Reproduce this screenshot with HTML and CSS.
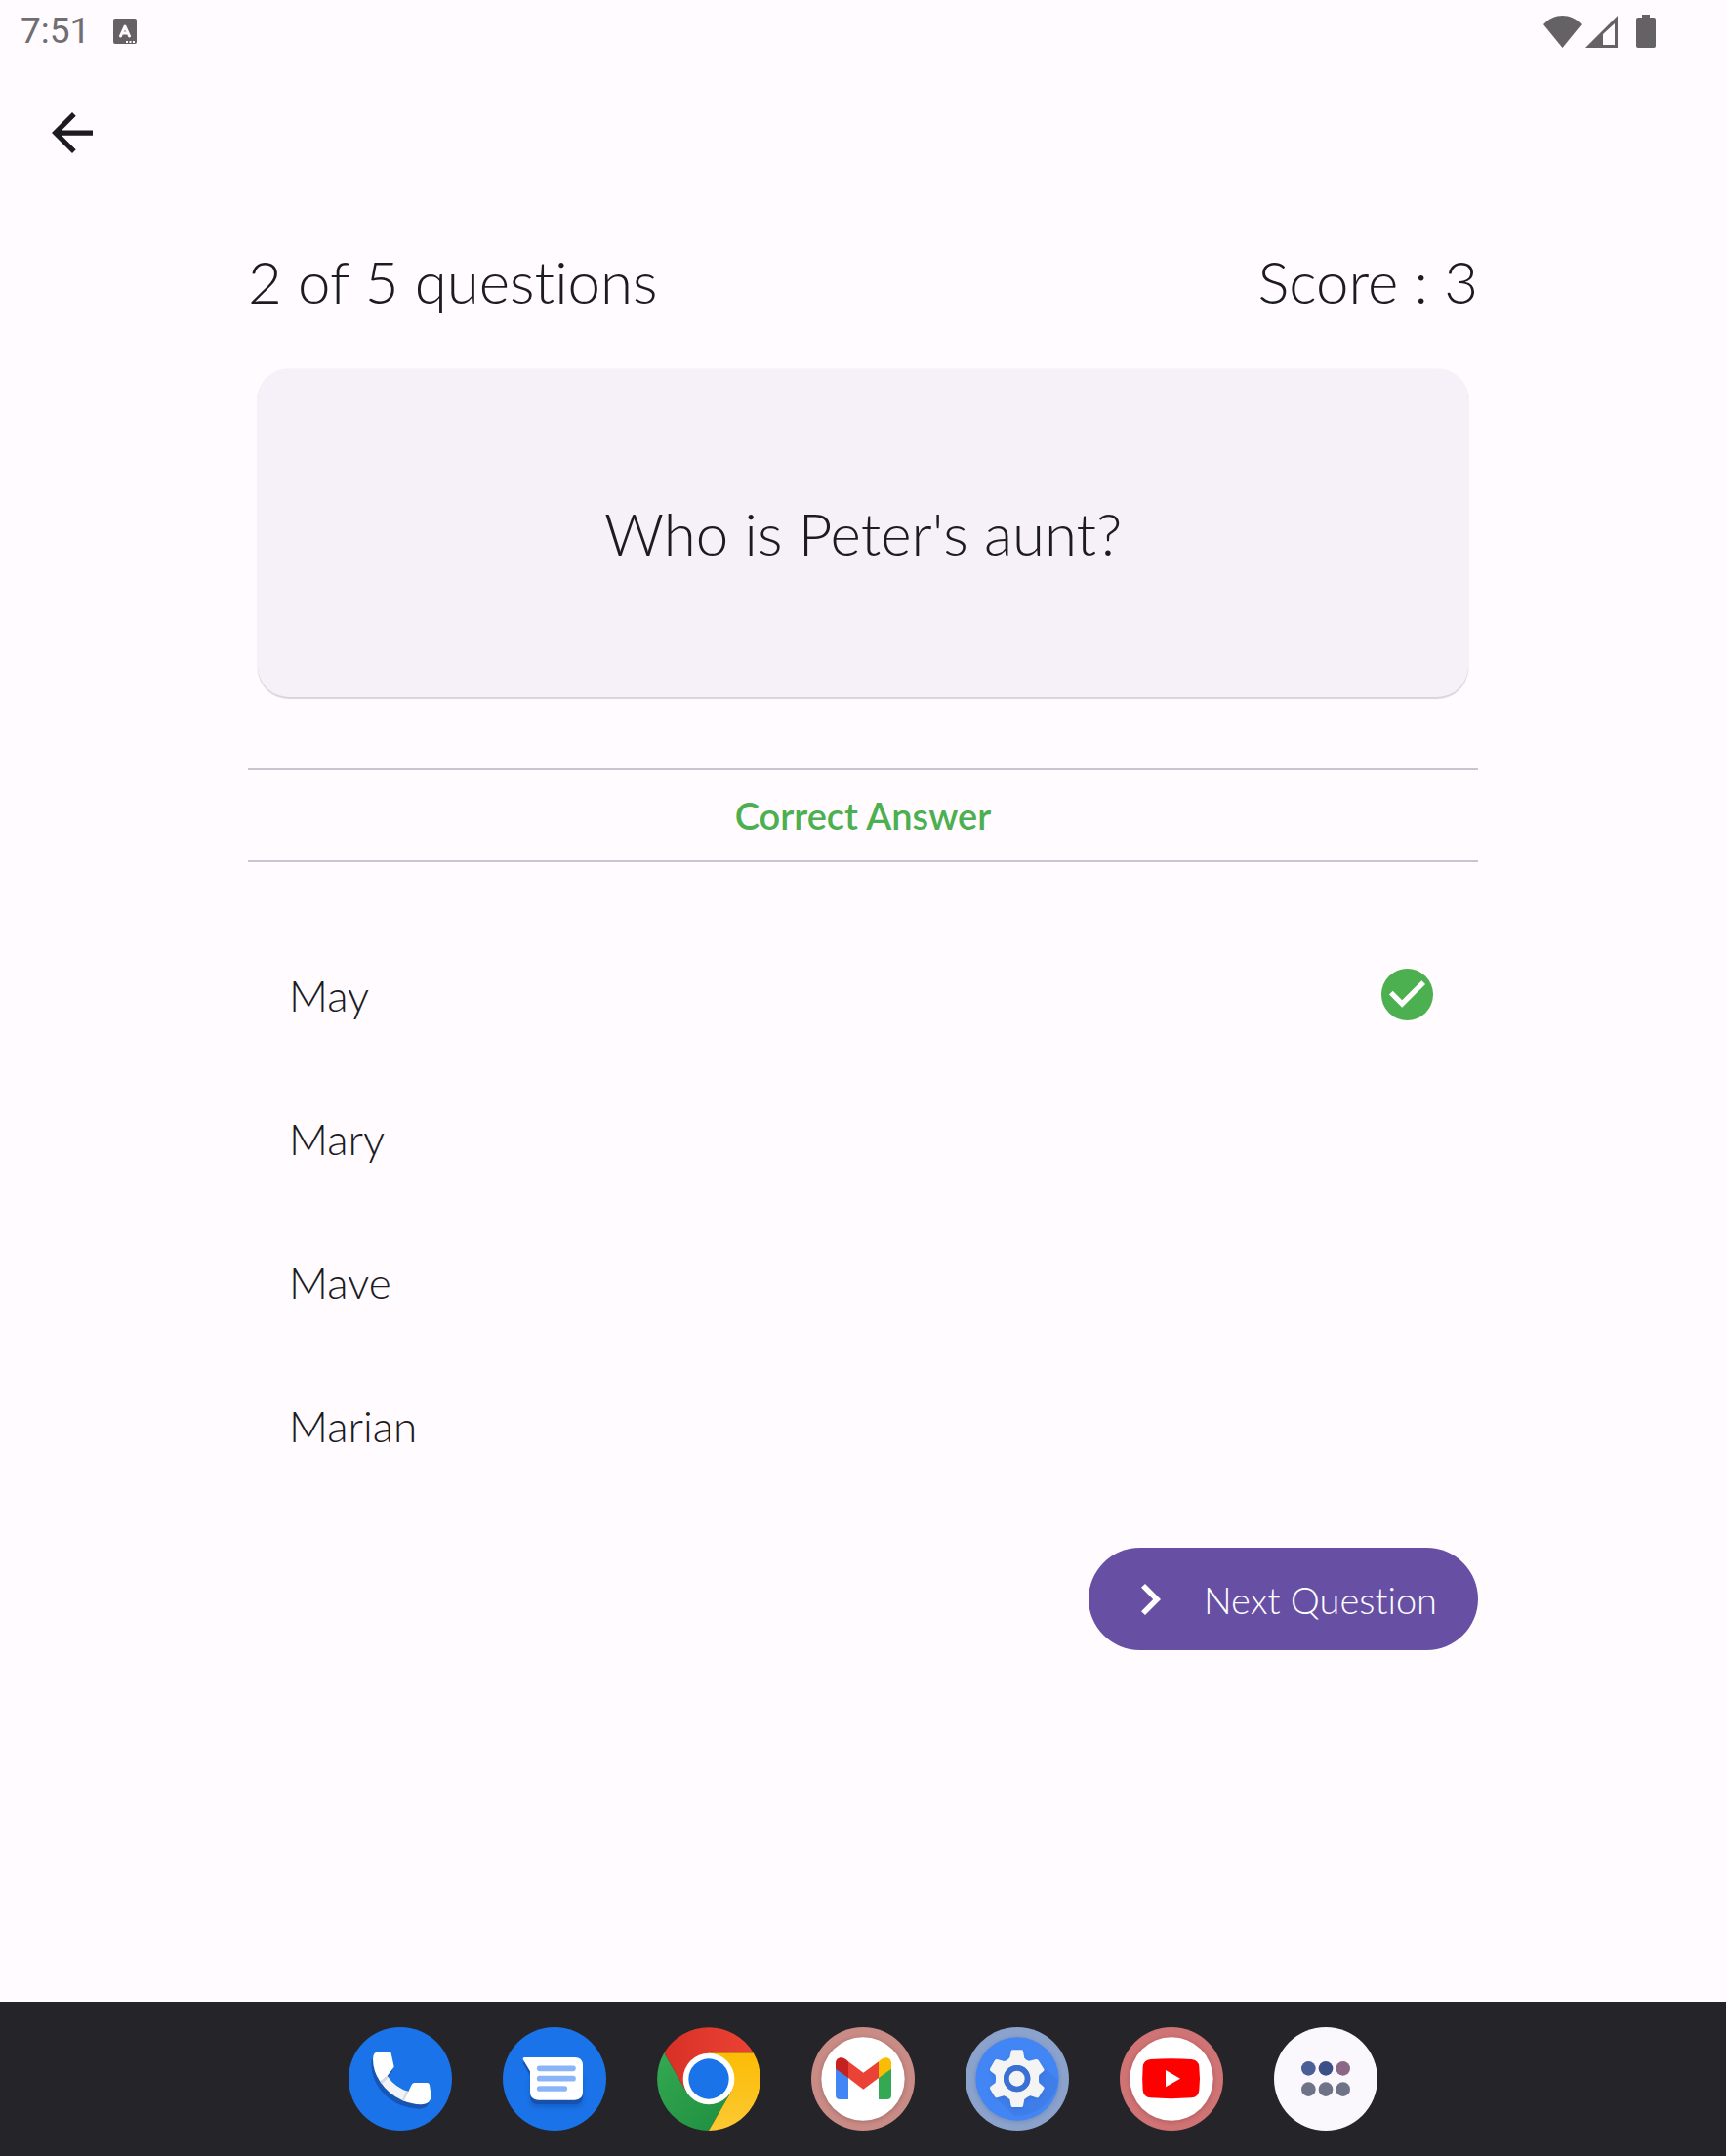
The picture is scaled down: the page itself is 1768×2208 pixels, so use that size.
FILE: index.html
```html
<!DOCTYPE html>
<html lang="en">
<head>
<meta charset="utf-8">
<meta name="viewport" content="width=device-width, initial-scale=1">
<title>Quiz</title>
<link rel="stylesheet" href="styles.css">
</head>
<body>
<div class="status-bar">
  <div class="status-group">
    <span class="clock">7:51</span>
    <svg class="status-app" viewBox="0 0 24 26" aria-hidden="true"><rect width="24" height="26" rx="2" fill="#656266"/><path d="M7.500 18 12 8 16.500 18M9 15h6" fill="none" stroke="#fffbff" stroke-width="3" stroke-linecap="round" stroke-linejoin="round"/><path d="M13 23h2v2h-2zM16.500 23h2v2h-2zM20 23h2v2h-2z" fill="#fffbff"/></svg>
  </div>
  <div class="status-group status-signals">
    <svg class="wifi" viewBox="0 0 39 33" aria-hidden="true"><path d="M0 9C11-3 28-3 39 9L19.500 33z" fill="#656266"/></svg>
    <svg class="cell" viewBox="0 0 33 33" aria-hidden="true"><path fill="#656266" fill-rule="evenodd" d="M0 33 33 0v33zM18 30h12V8L18 19z"/></svg>
    <svg class="battery" viewBox="0 0 20 34" aria-hidden="true"><path d="M6 0h8v3h4q2 0 2 2v27q0 2-2 2H2q-2 0-2-2V5q0-2 2-2h4z" fill="#656266"/></svg>
  </div>
</div>
<header class="app-bar">
  <button class="back" type="button" aria-label="Back"><svg viewBox="4 4 16 16" aria-hidden="true"><path d="M20 11H7.830l5.590-5.590L12 4l-8 8 8 8 1.410-1.410L7.830 13H20z" fill="#1c1b1f"/></svg></button>
</header>
<main class="quiz">
  <div class="progress"><span>2 of 5 questions</span><span>Score : 3</span></div>
  <h1 class="question">Who is Peter's aunt?</h1>
  <p class="verdict">Correct Answer</p>
  <div class="options">
    <button class="option" type="button"><span>May</span><svg class="check" viewBox="2 2 20 20" role="img" aria-label="Correct"><circle cx="12" cy="12" r="10" fill="#4caf50"/><path d="m10 17-5-5 1.410-1.410L10 14.170l7.590-7.590L19 8z" fill="#fff"/></svg></button>
    <button class="option" type="button"><span>Mary</span></button>
    <button class="option" type="button"><span>Mave</span></button>
    <button class="option" type="button"><span>Marian</span></button>
  </div>
  <button class="next" type="button"><svg viewBox="0 0 20 32" aria-hidden="true"><path d="M4 0 20 16 4 32 0 28.200 12.200 16 0 3.800z" fill="#fff"/></svg><span>Next Question</span></button>
</main>
<nav class="taskbar" aria-label="Apps">
  <button class="app" type="button" aria-label="Phone">
    <svg viewBox="51 108 318 318"><defs><filter id="soft" x="-30%" y="-30%" width="160%" height="180%"><feGaussianBlur stdDeviation="6"/></filter></defs>
      <circle cx="210" cy="267" r="159" fill="#1a73e8"/>
      <path transform="translate(-5 13)" d="M126 206Q126 183 145 183H176Q181 183 182 188L191 230 170 258Q195 294 235 306L245 285Q248 279 254 279H292Q299 279 300 286L305 318Q304 345 275 346C190 344 126 282 126 206Z" fill="#174ea6" opacity=".8"/>
      <path d="M170 258Q195 294 235 306L216 333Q172 312 148 275Z" fill="#f1f3f4"/>
      <path d="M126 206Q126 183 145 183H176Q181 183 182 188L191 230 170 258 148 275Q126 243 126 206ZM235 306L245 285Q248 279 254 279H292Q299 279 300 286L305 318Q304 345 275 346 244 345 216 333Z" fill="#fff"/>
      <path d="M148 275 170 258l4 6-21 18zM216 333 228 304l7 2-13 29z" fill="#dadce0"/></svg>
  </button>
  <button class="app" type="button" aria-label="Messages">
    <svg viewBox="525 108 318 318"><circle cx="684" cy="267" r="159" fill="#1a73e8"/>
      <path transform="translate(0 22)" d="M609 235h162v73q0 24-24 24H633q-24 0-24-24z" fill="#174ea6" opacity=".5" filter="url(#soft)"/>
      <path transform="translate(0 13)" d="M592 201H746Q771 201 771 226V307Q771 332 746 332H634Q609 332 609 307V244L587 207Q586 201 592 201Z" fill="#174ea6" opacity=".8"/>
      <path d="M592 201H746Q771 201 771 226V307Q771 332 746 332H634Q609 332 609 307V244L587 207Q586 201 592 201Z" fill="#fff"/>
      <path d="M638 235H741M638 266H741M638 297H715" stroke="#8ab4f8" stroke-width="17" stroke-linecap="round"/></svg>
  </button>
  <button class="app" type="button" aria-label="Chrome">
    <svg viewBox="39 108 318 318"><defs><linearGradient id="cr"><stop stop-color="#d93025"/><stop offset="1" stop-color="#ea4335"/></linearGradient><linearGradient id="cy" x1="0" y1="1" x2="0" y2="0"><stop stop-color="#fcc934"/><stop offset="1" stop-color="#fbbc04"/></linearGradient><linearGradient id="cg" x1="0" y1="0" x2="1" y2="1"><stop stop-color="#34a853"/><stop offset="1" stop-color="#1e8e3e"/></linearGradient></defs>
      <path d="M198 267 129 306 61 187A159 159 0 0 0 198 426L267 306Z" fill="url(#cg)"/>
      <path d="M198 187H335A159 159 0 0 1 198 426L267 306 198 267Z" fill="url(#cy)"/>
      <path d="M198 267V187H335A159 159 0 0 0 61 187L129 306Z" fill="url(#cr)"/>
      <circle cx="198" cy="267" r="79" fill="#fff"/><circle cx="198" cy="267" r="62" fill="#1a73e8"/></svg>
  </button>
  <button class="app" type="button" aria-label="Gmail">
    <svg viewBox="513 108 318 318"><circle cx="672" cy="267" r="159" fill="#c88b86"/><circle cx="672" cy="270" r="130" fill="#5a2020" opacity=".25" filter="url(#soft)"/><circle cx="672" cy="267" r="128" fill="#fff"/>
      <path d="M588 234 627 262V330H601Q588 330 588 317Z" fill="#4285f4"/><path d="M759 234 720 262V330H746Q759 330 759 317Z" fill="#34a853"/>
      <path d="M627 214 673 248 720 214V264L673 299 627 264Z" fill="#ea4335"/>
      <path d="M588 236V219C588 201 609 194 627 214V264Z" fill="#c5221f"/><path d="M759 236V219C759 201 738 194 720 214V264Z" fill="#fbbc04"/></svg>
  </button>
  <button class="app" type="button" aria-label="Settings">
    <svg viewBox="57 108 318 318"><circle cx="216" cy="267" r="159" fill="#8ba2cc"/><circle cx="216" cy="270" r="130" fill="#20407a" opacity=".2" filter="url(#soft)"/><circle cx="216" cy="267" r="128" fill="#4285f4"/>
      <path d="M299 235 342 270A128 128 0 0 1 206 380L150 324Z" fill="#3b74d9" opacity=".4"/>
      <path fill="#1f4fa8" opacity=".2" filter="url(#soft)" transform="translate(0 6)" d="M200 178H232L238 203 252 211 276 207 299 235 282 267 299 299 281 324 254 321 238 330 232 354H200L194 330 177 321 150 324 132 299 150 267 132 235 150 208 177 212 194 203Z"/>
      <path fill="#f4f4f4" fill-rule="evenodd" d="M202 178H230Q233 178 234 182L238 203Q242 209 252 212L273 207Q278 206 281 210L298 237Q300 240 297 243L283 255Q281 267 283 279L297 291Q300 294 298 298L282 323Q280 326 275 325L256 319Q247 322 238 330L234 350Q233 354 229 354H202Q198 354 197 350L193 330Q184 322 175 319L154 325Q150 326 147 322L132 297Q131 293 134 290L149 279Q151 267 149 255L134 243Q131 240 132 236L147 210Q150 206 154 207L176 213Q187 210 193 202L197 182Q198 178 202 178ZM215 225A41 41 0 1 0 215 307A41 41 0 1 0 215 225Z"/>
      <circle cx="215" cy="266" r="41" fill="#3a6fd4"/><circle cx="215" cy="266" r="24" fill="#f4f4f4"/></svg>
  </button>
  <button class="app" type="button" aria-label="YouTube">
    <svg viewBox="531 108 318 318"><circle cx="690" cy="267" r="159" fill="#cf7375"/><circle cx="690" cy="270" r="130" fill="#6a2020" opacity=".25" filter="url(#soft)"/><circle cx="690" cy="267" r="128" fill="#fff"/>
      <path d="M626 207Q689 202 751 207Q774 210 775 230Q779 266 775 302Q773 323 751 325Q689 330 626 325Q604 323 602 302Q599 266 602 230Q604 209 626 207Z" fill="red"/><path d="M672 240 717 266 672 292Z" fill="#fff"/></svg>
  </button>
  <button class="app" type="button" aria-label="All apps">
    <svg viewBox="45 108 318 318"><circle cx="204" cy="267" r="159" fill="#faf8fd"/><circle cx="151" cy="235" r="22" fill="#4a5f96"/><circle cx="204" cy="235" r="22" fill="#3c5087"/><circle cx="257" cy="235" r="22" fill="#8b6788"/><g fill="#6e7388"><circle cx="151" cy="299" r="22"/><circle cx="204" cy="299" r="22"/><circle cx="257" cy="299" r="22"/></g></svg>
  </button>
</nav>
</body>
</html>
```
FILE: styles.css
```css
* { box-sizing: border-box; }
body {
  margin: 0;
  min-height: 100vh;
  display: flex;
  flex-direction: column;
  background: #fffbff;
  color: #1c1b1f;
  font-family: Lato, "Open Sans", sans-serif;
  font-weight: 300;
  font-variant-ligatures: none;
}
button {
  margin: 0;
  padding: 0;
  border: 0;
  background: none;
  color: inherit;
  font: inherit;
  font-variant-ligatures: none;
  cursor: pointer;
}
svg { display: block; flex: none; }

.status-bar {
  height: 64px;
  padding: 0 72px 0 21px;
  display: flex;
  align-items: center;
  justify-content: space-between;
}
.status-group { display: flex; align-items: center; gap: 24px; }
.status-signals { gap: 4px; }
.clock { font-family: Roboto, sans-serif; font-weight: 400; font-size: 37px; line-height: 64px; color: #706e72; }
.status-app { width: 24px; height: 26px; }
.wifi { width: 39px; height: 33px; }
.cell { width: 33px; height: 33px; }
.battery { width: 20px; height: 34px; margin-left: 15px; }

.app-bar { height: 144px; padding: 0 32px; display: flex; align-items: center; }
.back { width: 84px; height: 84px; display: grid; place-items: center; }
.back svg { width: 42px; height: 42px; }

.quiz {
  flex: 1;
  width: calc(100% - 48px);
  max-width: 1260px;
  margin: 0 auto;
  padding: 44px 0 52px;
  display: flex;
  flex-direction: column;
}
.progress {
  display: flex;
  justify-content: space-between;
  gap: 24px;
  font-size: 60px;
  line-height: 72px;
}
.question {
  margin: 54px 10px 0;
  padding: 132px 32px;
  border-radius: 32px;
  background: #f6f1f8;
  box-shadow: 0 2px 1px #d9d4dc, 0 0 2px #e6e1e8;
  font-size: 60px;
  line-height: 72px;
  font-weight: 300;
  text-align: center;
}
.verdict {
  margin: 73px 0 62px;
  padding: 22px 0;
  border: solid #cac4d0;
  border-width: 2px 0;
  color: #4caf50;
  font-size: 38px;
  line-height: 48px;
  font-weight: 600;
  text-align: center;
}
.options { display: flex; flex-direction: column; }
.option {
  min-height: 147px;
  padding: 0 46px 0 42px;
  display: flex;
  align-items: center;
  justify-content: space-between;
  font-size: 44px;
  line-height: 56px;
  text-align: left;
}
.check { width: 53px; height: 53px; }
.next {
  align-self: flex-end;
  height: 105px;
  margin-top: 52px;
  padding: 0 42px 0 54px;
  display: flex;
  align-items: center;
  gap: 44px;
  border-radius: 53px;
  background: #6750a4;
  color: #fff;
  font-size: 38px;
  line-height: 48px;
}
.next svg { width: 20px; height: 32px; }

.taskbar {
  padding: 26px 24px;
  display: flex;
  flex-wrap: wrap;
  justify-content: center;
  gap: 52px;
  background: #252429;
}
.app { width: 106px; height: 106px; border-radius: 50%; }
.app svg { width: 106px; height: 106px; }
```
